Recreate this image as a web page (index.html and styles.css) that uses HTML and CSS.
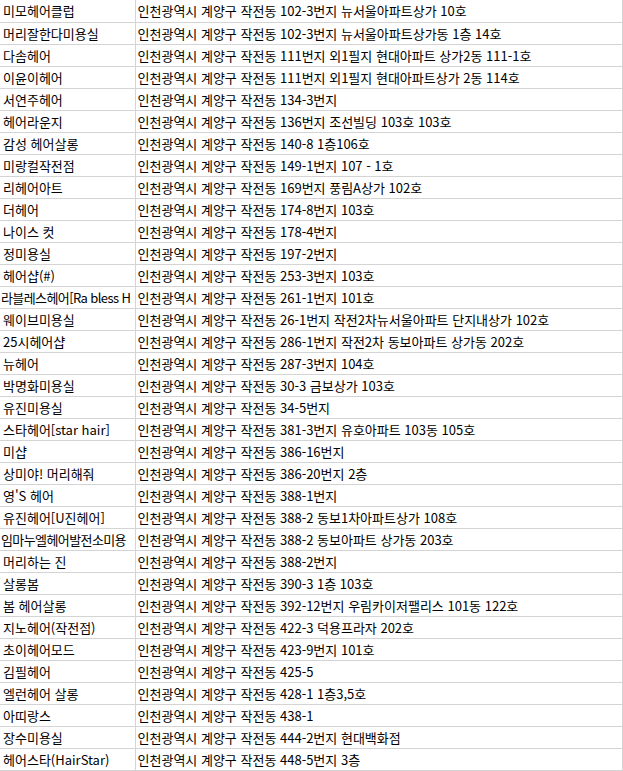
FILE: index.html
```html
<!DOCTYPE html>
<html lang="ko">
<head>
<meta charset="utf-8">
<link rel="stylesheet" href="styles.css">
</head>
<body>
<table class="sheet">
<colgroup><col class="c-name"><col class="c-addr"></colgroup>
<tbody>
<tr><td class="name">미모헤어클럽</td><td class="addr">인천광역시 계양구 작전동 102-3번지 뉴서울아파트상가 10호</td></tr>
<tr><td class="name">머리잘한다미용실</td><td class="addr">인천광역시 계양구 작전동 102-3번지 뉴서울아파트상가동 1층 14호</td></tr>
<tr><td class="name">다솜헤어</td><td class="addr">인천광역시 계양구 작전동 111번지 외1필지 현대아파트 상가2동 111-1호</td></tr>
<tr><td class="name">이윤이헤어</td><td class="addr">인천광역시 계양구 작전동 111번지 외1필지 현대아파트상가 2동 114호</td></tr>
<tr><td class="name">서연주헤어</td><td class="addr">인천광역시 계양구 작전동 134-3번지</td></tr>
<tr><td class="name">헤어라운지</td><td class="addr">인천광역시 계양구 작전동 136번지 조선빌딩 103호 103호</td></tr>
<tr><td class="name">감성 헤어살롱</td><td class="addr">인천광역시 계양구 작전동 140-8 1층106호</td></tr>
<tr><td class="name">미랑컬작전점</td><td class="addr">인천광역시 계양구 작전동 149-1번지 107 - 1호</td></tr>
<tr><td class="name">리헤어아트</td><td class="addr">인천광역시 계양구 작전동 169번지 풍림A상가 102호</td></tr>
<tr><td class="name">더헤어</td><td class="addr">인천광역시 계양구 작전동 174-8번지 103호</td></tr>
<tr><td class="name">나이스 컷</td><td class="addr">인천광역시 계양구 작전동 178-4번지</td></tr>
<tr><td class="name">정미용실</td><td class="addr">인천광역시 계양구 작전동 197-2번지</td></tr>
<tr><td class="name">헤어샵(#)</td><td class="addr">인천광역시 계양구 작전동 253-3번지 103호</td></tr>
<tr><td class="name tight">라블레스헤어[Ra bless H</td><td class="addr">인천광역시 계양구 작전동 261-1번지 101호</td></tr>
<tr><td class="name">웨이브미용실</td><td class="addr">인천광역시 계양구 작전동 26-1번지 작전2차뉴서울아파트 단지내상가 102호</td></tr>
<tr><td class="name">25시헤어샵</td><td class="addr">인천광역시 계양구 작전동 286-1번지 작전2차 동보아파트 상가동 202호</td></tr>
<tr><td class="name">뉴헤어</td><td class="addr">인천광역시 계양구 작전동 287-3번지 104호</td></tr>
<tr><td class="name">박명화미용실</td><td class="addr">인천광역시 계양구 작전동 30-3 금보상가 103호</td></tr>
<tr><td class="name">유진미용실</td><td class="addr">인천광역시 계양구 작전동 34-5번지</td></tr>
<tr><td class="name">스타헤어[star hair]</td><td class="addr">인천광역시 계양구 작전동 381-3번지 유호아파트 103동 105호</td></tr>
<tr><td class="name">미샵</td><td class="addr">인천광역시 계양구 작전동 386-16번지</td></tr>
<tr><td class="name">상미야! 머리해줘</td><td class="addr">인천광역시 계양구 작전동 386-20번지 2층</td></tr>
<tr><td class="name">영'S 헤어</td><td class="addr">인천광역시 계양구 작전동 388-1번지</td></tr>
<tr><td class="name">유진헤어[U진헤어]</td><td class="addr">인천광역시 계양구 작전동 388-2 동보1차아파트상가 108호</td></tr>
<tr><td class="name tight">임마누엘헤어발전소미용</td><td class="addr">인천광역시 계양구 작전동 388-2 동보아파트 상가동 203호</td></tr>
<tr><td class="name">머리하는 진</td><td class="addr">인천광역시 계양구 작전동 388-2번지</td></tr>
<tr><td class="name">살롱봄</td><td class="addr">인천광역시 계양구 작전동 390-3 1층 103호</td></tr>
<tr><td class="name">봄 헤어살롱</td><td class="addr">인천광역시 계양구 작전동 392-12번지 우림카이저팰리스 101동 122호</td></tr>
<tr><td class="name">지노헤어(작전점)</td><td class="addr">인천광역시 계양구 작전동 422-3 덕용프라자 202호</td></tr>
<tr><td class="name">초이헤어모드</td><td class="addr">인천광역시 계양구 작전동 423-9번지 101호</td></tr>
<tr><td class="name">김필헤어</td><td class="addr">인천광역시 계양구 작전동 425-5</td></tr>
<tr><td class="name">엘런헤어 살롱</td><td class="addr">인천광역시 계양구 작전동 428-1 1층3,5호</td></tr>
<tr><td class="name">아띠랑스</td><td class="addr">인천광역시 계양구 작전동 438-1</td></tr>
<tr><td class="name">장수미용실</td><td class="addr">인천광역시 계양구 작전동 444-2번지 현대백화점</td></tr>
<tr><td class="name">헤어스타(HairStar)</td><td class="addr">인천광역시 계양구 작전동 448-5번지 3층</td></tr>
</tbody>
</table>
</body>
</html>
```

FILE: styles.css
```css
html, body {
  margin: 0;
  padding: 0;
  background: #ffffff;
}

body {
  font-family: "Noto Sans CJK KR", "Noto Sans", "Liberation Sans", sans-serif;
  font-size: 13px;
  color: #000000;
}

.sheet {
  border-collapse: collapse;
  table-layout: fixed;
  width: 622px;
}

.c-name {
  width: 135px;
}

.c-addr {
  width: 487px;
}

.sheet td {
  height: 22px;
  padding: 0 0 0 3px;
  border-bottom: 1px solid #d4d4d4;
  border-right: 1px solid #d4d4d4;
  white-space: nowrap;
  overflow: hidden;
  line-height: 21px;
  vertical-align: middle;
  box-sizing: border-box;
}

.sheet td.tight {
  padding-left: 1px;
  letter-spacing: -0.6px;
}

.sheet td.addr {
  padding-left: 2px;
}
```
